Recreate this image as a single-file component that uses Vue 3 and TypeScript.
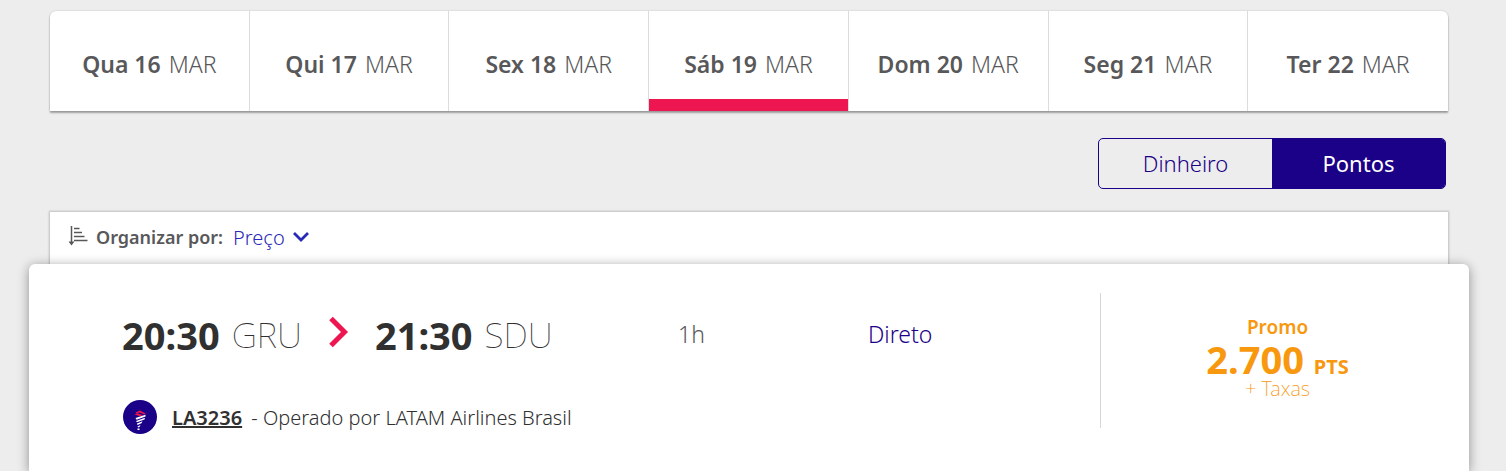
<script setup lang="ts">
import { ref } from 'vue'

interface Day {
  label: string
  month: string
}

const days: Day[] = [
  { label: 'Qua 16', month: 'MAR' },
  { label: 'Qui 17', month: 'MAR' },
  { label: 'Sex 18', month: 'MAR' },
  { label: 'Sáb 19', month: 'MAR' },
  { label: 'Dom 20', month: 'MAR' },
  { label: 'Seg 21', month: 'MAR' },
  { label: 'Ter 22', month: 'MAR' },
]

const currencies = ['Dinheiro', 'Pontos']

const selectedDay = ref(3)
const currency = ref('Pontos')
</script>

<template>
  <main class="page">
    <nav class="days" aria-label="Datas">
      <button
        v-for="(day, i) in days"
        :key="day.label"
        type="button"
        class="day"
        :class="{ active: i === selectedDay }"
        @click="selectedDay = i"
      >
        <strong>{{ day.label }}</strong>
        <span class="month">{{ day.month }}</span>
      </button>
    </nav>

    <div class="currency">
      <button
        v-for="c in currencies"
        :key="c"
        type="button"
        class="option"
        :class="{ chosen: c === currency }"
        @click="currency = c"
      >
        {{ c }}
      </button>
    </div>

    <div class="sort">
      <svg class="sort-icon" width="20" height="20" viewBox="0 0 20 20" fill="none" stroke="#58585a" aria-hidden="true">
        <path d="M3.500 0V17M6 2.500H11.500M6 6.500H14M6 10.500H16.500M6 14.500H19.500" stroke-width="1.500" />
        <path d="M0.500 15.500H6.500L3.500 19.500Z" fill="#58585a" stroke="none" />
      </svg>
      <span class="sort-label">Organizar por:</span>
      <button type="button" class="sort-value">
        Preço
        <svg width="16" height="10" viewBox="0 0 16 10" fill="none" stroke="#2a2ab8" stroke-width="2.800" aria-hidden="true">
          <path d="M1 1L8 8L15 1" />
        </svg>
      </button>
    </div>

    <article class="flight">
      <div class="details">
        <div class="route">
          <div class="times">
            <span class="time">20:30</span>
            <span class="airport">GRU</span>
            <svg class="arrow" width="20" height="32" viewBox="0 0 20 32" fill="none" stroke="#ed1650" stroke-width="5" aria-hidden="true">
              <path d="M2 2.500L15.500 16L2 29.500" />
            </svg>
            <span class="time">21:30</span>
            <span class="airport">SDU</span>
          </div>
          <span class="duration">1h</span>
          <a class="stops" href="#">Direto</a>
        </div>
        <div class="operator">
          <svg width="34" height="34" viewBox="0 0 34 34" aria-hidden="true">
            <circle cx="17" cy="17" r="17" fill="#1b0088" />
            <path d="M12.500 12.500L17 10.500L22.500 13.500L21.500 14.500L16.500 12.500L13.500 13.500Z" fill="#ed1650" />
            <path d="M11.500 14.500L14.500 13.200L20 15.200L17 16.200Z" fill="#ed1650" />
            <path d="M12.500 18L22.500 14.800V16.500L13.500 19.800ZM13 21L22 17.800L21.500 19.500L14 22.300ZM14 23.500L19.500 21.300L18.500 23.300L14.500 25ZM14.500 26.500L17.500 25L16.500 27L15 27.500ZM14.500 28.500H16.500V30H14.500Z" fill="#fff" />
          </svg>
          <p class="operator-text"><a class="number" href="#">LA3236</a> - Operado por LATAM Airlines Brasil</p>
        </div>
      </div>
      <div class="price">
        <span class="promo">Promo</span>
        <span class="amount">2.700 <small>PTS</small></span>
        <span class="taxes">+ Taxas</span>
      </div>
    </article>
  </main>
</template>

<style>
body {
  background: #ededed;
}
</style>

<style scoped>
.page {
  padding: 11px 37px 0 29px;
  overflow: hidden;
  font-family: "Noto Sans", "Open Sans", sans-serif;
  color: #58585a;
}

button {
  border: 0;
  padding: 0;
  background: none;
  font: inherit;
  color: inherit;
  cursor: pointer;
}

.days {
  display: grid;
  grid-template-columns: repeat(7, 1fr);
  margin: 0 21px;
  background: #fff;
  border-radius: 6px 6px 0 0;
  box-shadow: 0 2px 2px rgba(0, 0, 0, 0.32), 0 0 2px rgba(0, 0, 0, 0.2);
}

.day {
  display: flex;
  align-items: center;
  justify-content: center;
  gap: 8px;
  height: 100px;
  padding-top: 5px;
  font-size: 23px;
  line-height: 30px;
  border-right: 1px solid #dcdcdc;
}

.day:last-child {
  border-right: 0;
}

.day strong {
  font-weight: 600;
}

.month {
  font-weight: 300;
}

.day.active {
  box-shadow: inset 0 -12px #ed1650;
}

.currency {
  display: grid;
  grid-template-columns: 1fr 1fr;
  width: 348px;
  margin: 27px 23px 0 auto;
  box-sizing: border-box;
  border: 1px solid #1b0088;
  border-radius: 5px;
  overflow: hidden;
}

.option {
  height: 49px;
  padding-bottom: 2px;
  font-size: 22px;
  font-weight: 300;
  color: #1b0088;
}

.option.chosen {
  background: #1b0088;
  color: #fff;
  font-weight: 400;
}

.sort {
  display: flex;
  align-items: center;
  height: 50px;
  margin: 23px 21px 0;
  padding: 0 0 2px 18px;
  background: #fff;
  box-shadow: 0 0 2px 1px rgba(0, 0, 0, 0.2);
  font-size: 20px;
}

.sort-icon {
  margin: 0 8px 2px 0;
}

.sort-label {
  margin-right: 10px;
  font-size: 18px;
  font-weight: 600;
}

.sort-value {
  display: flex;
  align-items: center;
  gap: 8px;
  font-weight: 300;
  color: #2a2ab8;
}

.flight {
  position: relative;
  display: flex;
  background: #fff;
  border-radius: 6px 6px 0 0;
  box-shadow: 0 2px 12px rgba(0, 0, 0, 0.4);
  padding: 29px 15px 16px 93px;
}

.details {
  flex: 1;
}

.route {
  display: grid;
  grid-template-columns: 506px 2fr 2fr;
  align-items: center;
  height: 86px;
}

.times {
  display: flex;
  align-items: center;
  color: #303030;
  font-size: 38px;
  line-height: 48px;
  padding-bottom: 2px;
}

.time {
  font-weight: 700;
}

.airport {
  margin-left: 12px;
  font-size: 35px;
  font-weight: 100;
}

.arrow {
  margin: 0 26px 6px 27px;
}

.duration,
.stops {
  padding-bottom: 4px;
  font-size: 23px;
  font-weight: 300;
}

.duration {
  margin-left: 50px;
}

.stops {
  margin-left: 4px;
  color: #1b0088;
  text-decoration: none;
}

.operator {
  display: flex;
  align-items: center;
  gap: 15px;
  height: 76px;
  padding-left: 1px;
}

.operator-text {
  margin: 0;
  color: #303030;
  font-size: 20px;
  font-weight: 300;
}

.number {
  margin-right: 4px;
  color: inherit;
  font-weight: 600;
}

.price {
  display: flex;
  flex-direction: column;
  align-items: center;
  width: 354px;
  height: 135px;
  box-sizing: border-box;
  padding-top: 21px;
  border-left: 1px solid #d8d8d8;
  color: #f8980f;
}

.promo {
  font-size: 19px;
  line-height: 26px;
  font-weight: 600;
}

.amount {
  font-size: 38px;
  line-height: 38px;
  font-weight: 700;
}

.amount small {
  font-size: 20px;
  line-height: 20px;
}

.taxes {
  font-size: 20px;
  line-height: 22px;
  font-weight: 200;
}
</style>
